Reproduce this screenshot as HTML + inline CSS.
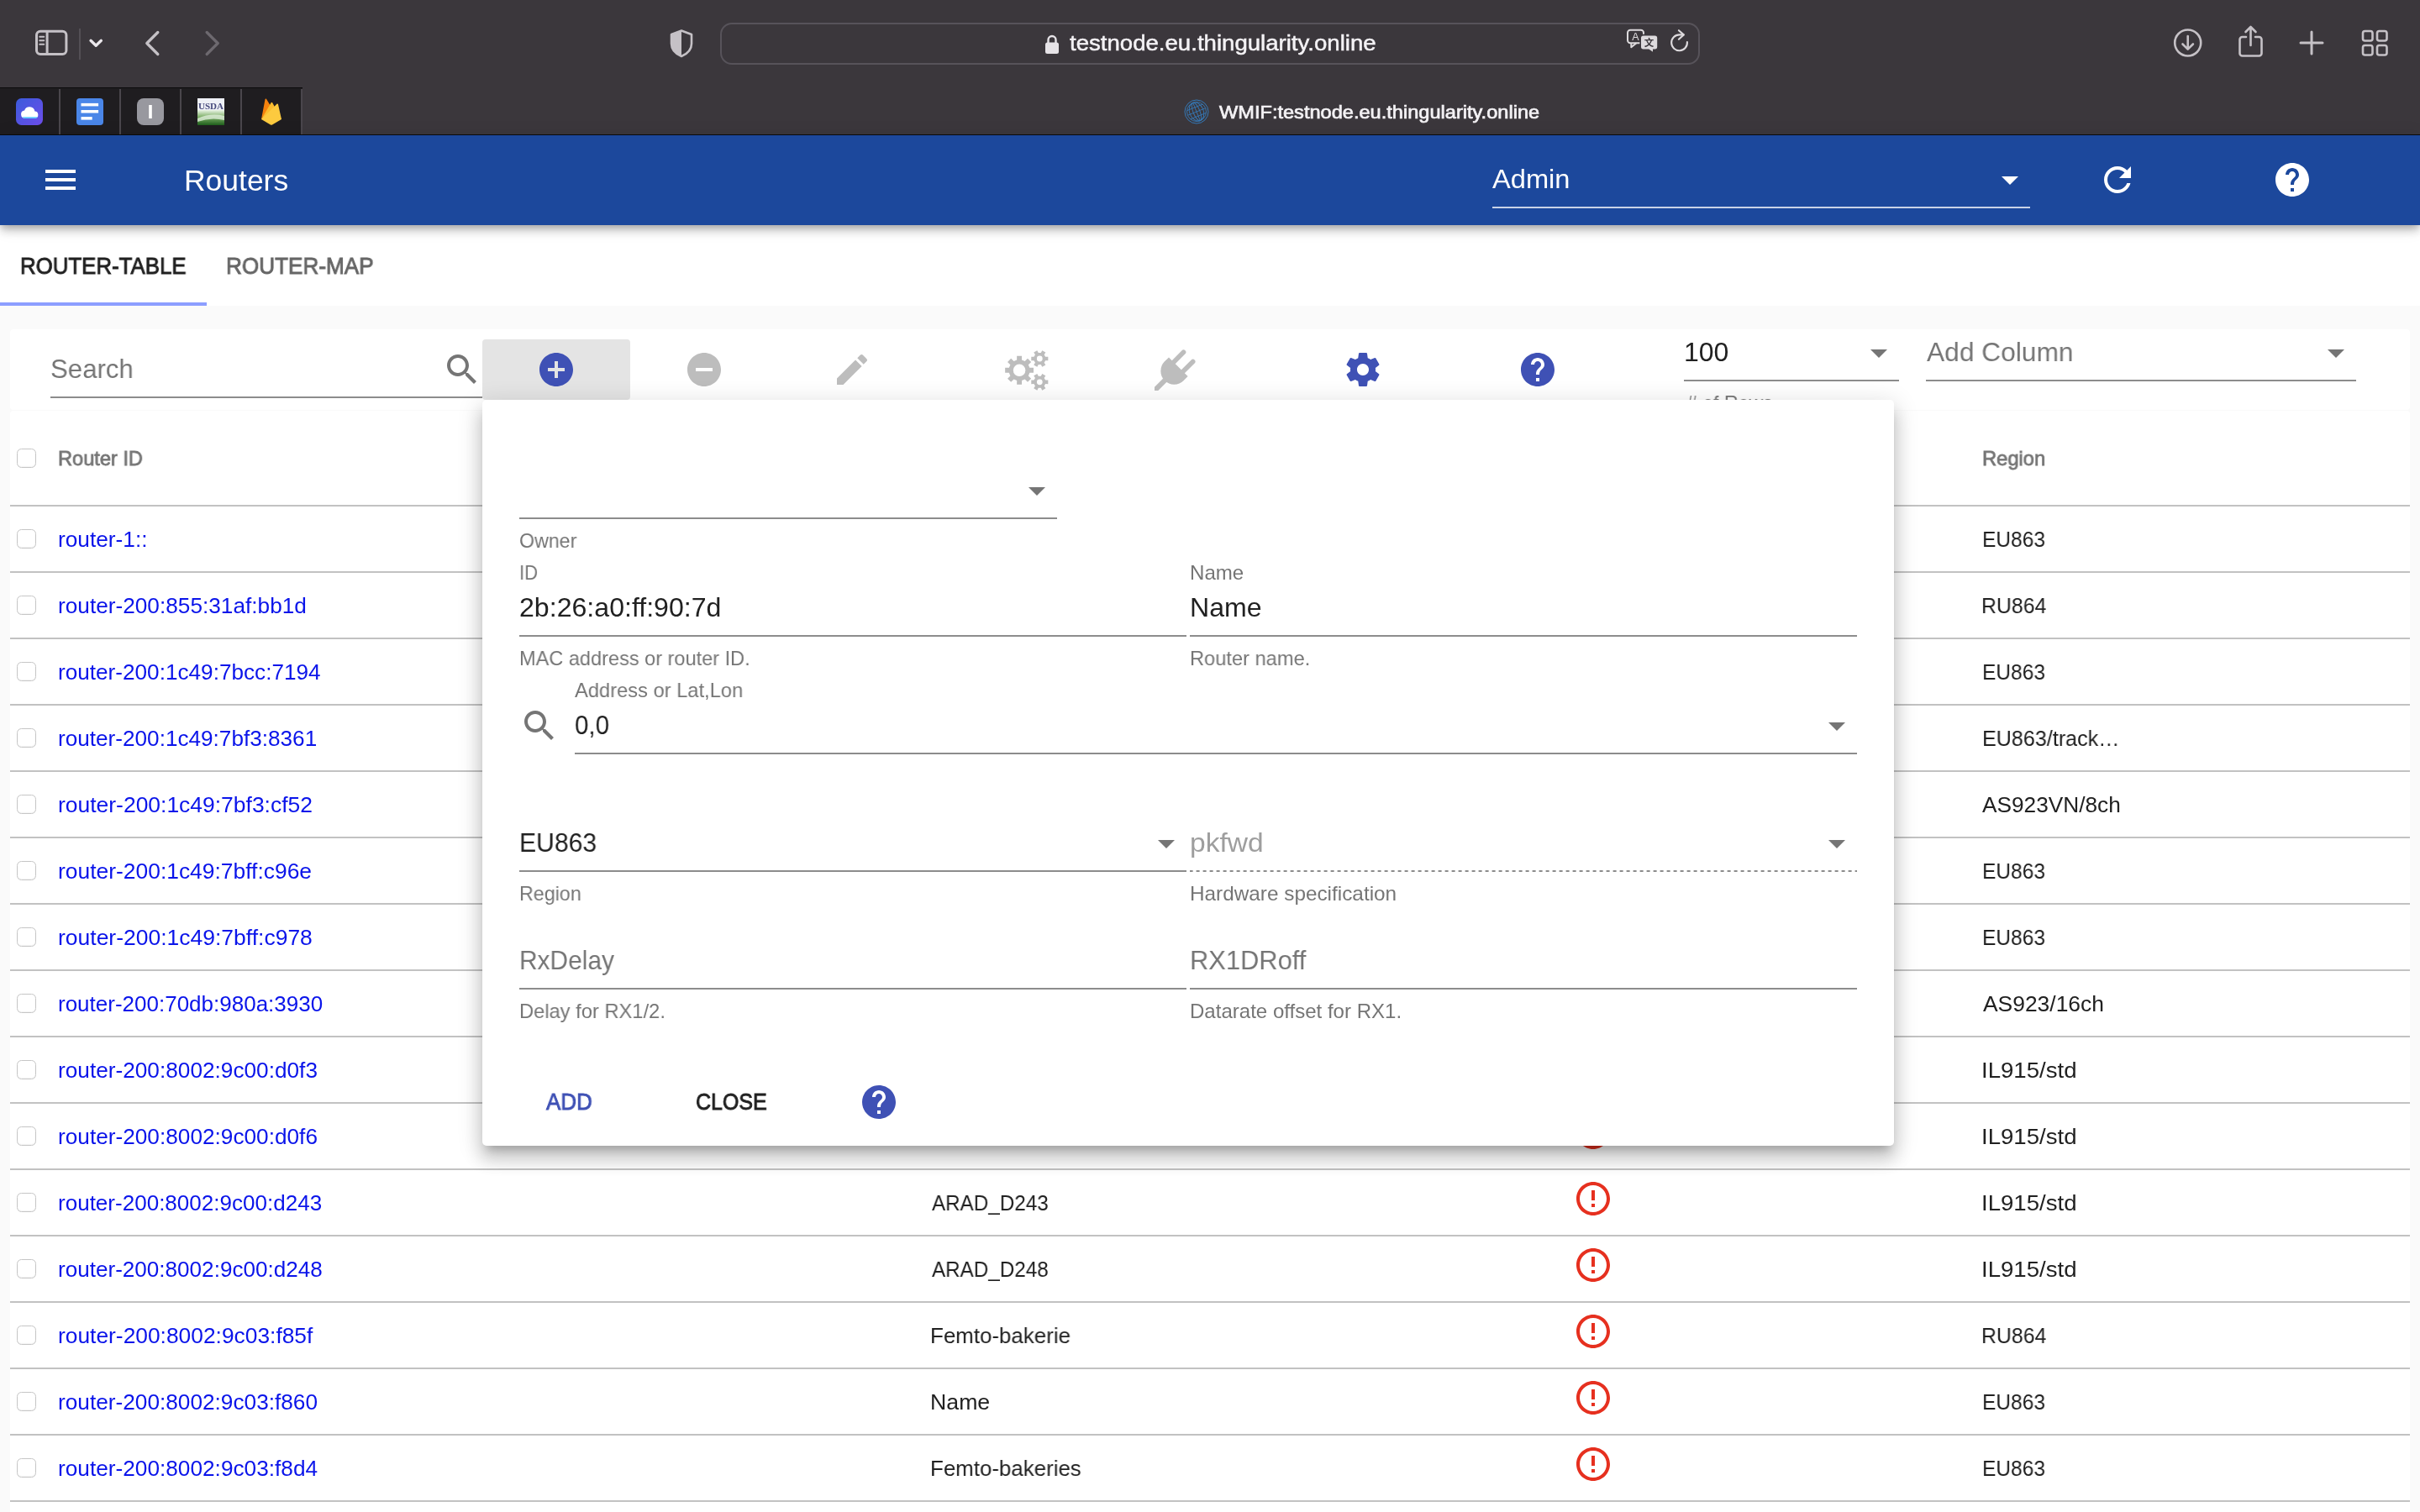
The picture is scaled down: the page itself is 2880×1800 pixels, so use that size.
<!DOCTYPE html>
<html lang="en"><head><meta charset="utf-8"><title>WMIF:testnode.eu.thingularity.online</title>
<style>

html,body{margin:0;padding:0;}
body{width:2880px;height:1800px;overflow:hidden;position:relative;background:#fafafa;font-family:"Liberation Sans",sans-serif;}
.ab{position:absolute;}
.t{position:absolute;white-space:nowrap;line-height:1;transform-origin:0 50%;will-change:transform;}
.ln{position:absolute;height:2px;background:#8e8e8e;}
a{color:inherit;text-decoration:none;}
.cb{left:20px;width:20.9px;height:20.9px;border:1.500px solid #c6c6c6;border-radius:5.500px;background:#fff;box-shadow:inset 0 -1px 1.500px rgba(0,0,0,.05)}

</style></head>
<body>
<div class="ab" style="left:0px;top:0px;width:2880px;height:161px;background:#3b373c;"></div>
<div class="ab" style="left:0px;top:104px;width:360px;height:1.3px;background:#0c0b0d;"></div>
<div class="ab" style="left:0px;top:105px;width:360px;height:55px;background:#1f1d20;"></div>
<div class="ab" style="left:70px;top:105.5px;width:2px;height:54.5px;background:#4a464c;"></div>
<div class="ab" style="left:142px;top:105.5px;width:2px;height:54.5px;background:#4a464c;"></div>
<div class="ab" style="left:214px;top:105.5px;width:2px;height:54.5px;background:#4a464c;"></div>
<div class="ab" style="left:286px;top:105.5px;width:2px;height:54.5px;background:#4a464c;"></div>
<div class="ab" style="left:358px;top:105.5px;width:2px;height:54.5px;background:#4a464c;"></div>
<div class="ab" style="left:0px;top:160px;width:2880px;height:1px;background:#0a0a0a;"></div>
<svg class="ab" style="left:19px;top:117px" width="32" height="32" viewBox="0 0 32 32"><defs><linearGradient id="g1" x1="0" y1="0" x2="1" y2="1"><stop offset="0" stop-color="#3b5bdb"/><stop offset="1" stop-color="#6d4deb"/></linearGradient></defs><rect width="32" height="32" rx="6.500" fill="url(#g1)"/><path fill="#fff" d="M10.800 23.800a4.700 4.700 0 0 1-.7-9.350 6.400 6.400 0 0 1 12.300 1.100A4.150 4.150 0 0 1 22.800 23.800z"/><path d="M7.500 22.300a4.700 4.700 0 0 0 3.300 1.600h12a4.150 4.150 0 0 0 3.300-1.600z" fill="#5cc8ff"/></svg>
<svg class="ab" style="left:91px;top:117px" width="32" height="32" viewBox="0 0 32 32"><rect width="32" height="32" rx="4" fill="#4a86e8"/><rect x="5.500" y="5.900" width="20.600" height="3.500" fill="#fff"/><rect x="5.500" y="14" width="20.600" height="3.500" fill="#fff"/><rect x="5.500" y="22.100" width="13.200" height="3.500" fill="#fff"/></svg>
<svg class="ab" style="left:163px;top:117px" width="32" height="32" viewBox="0 0 32 32"><rect width="32" height="32" rx="8" fill="#98989f"/><rect x="14.2" y="8" width="3.6" height="16" fill="#fff"/></svg>
<svg class="ab" style="left:235px;top:117px;will-change:transform" width="32" height="32" viewBox="0 0 32 32"><defs><linearGradient id="g4" x1="0" y1="0" x2="0" y2="1"><stop offset="0" stop-color="#e9f3e4"/><stop offset=".45" stop-color="#7fb069"/><stop offset="1" stop-color="#1f5f1c"/></linearGradient></defs><rect width="32" height="32" fill="#eef0f6"/><rect y="14" width="32" height="18" fill="url(#g4)"/><path d="M0 24 Q16 17 32 21 V26 Q16 22 0 28z" fill="#dfeeda" opacity=".8"/><text x="16" y="13" text-anchor="middle" font-family="Liberation Serif,serif" font-weight="700" font-size="11" fill="#34376f" opacity=".9" textLength="30" lengthAdjust="spacingAndGlyphs" style="filter:blur(.6px)">USDA</text></svg>
<svg class="ab" style="left:309px;top:116px" width="28" height="34" viewBox="0 0 28 34"><path fill="#f5820d" d="M2 26 L6.5 2.2 c.2-.9 1.2-1 1.6-.3 L13 10z"/><path fill="#fbbc2d" d="M2 26 L13.6 6.2 c.4-.7 1.2-.7 1.6 0 L26 26z"/><path fill="#fcca3f" d="M2 26 L20.5 7.8 c.5-.5 1.4-.3 1.5.5 L26 26 15 32.5 c-.7.4-1.4.4-2.1 0z"/></svg>
<svg class="ab" style="left:38px;top:30px" width="240" height="44" viewBox="0 0 240 44" fill="none" stroke="#c5c1c6" stroke-width="3" stroke-linecap="round" stroke-linejoin="round"><rect x="5.500" y="7.300" width="35.400" height="27.100" rx="4.500"/><path d="M18.100 7.300v27.100" stroke-linecap="butt"/><path d="M9.300 13.800h4.900M9.300 18.300h4.900M9.300 22.800h4.900" stroke-width="2.100"/><path d="M57 4.500v36" stroke="#5a565c" stroke-width="1.600"/><path d="M70 18.300l6.200 6 6.200-6" stroke="#ebe8ec" stroke-width="3.300"/><path d="M149.800 8.500L136.800 21.500 149.800 34.500" stroke-width="3.300"/><path d="M208.200 8.500L221.200 21.500 208.200 34.500" stroke="#6d696f" stroke-width="3.300"/></svg>
<svg class="ab" style="left:794px;top:32.800px" width="34" height="38" viewBox="0 0 34 38"><path d="M17 3.500 L29 8 V19 C29 26.500 23 31.500 17 34 C11 31.500 5 26.500 5 19 V8z" fill="none" stroke="#c5c1c6" stroke-width="2.600" stroke-linejoin="round"/><path d="M17 3.500 L5 8 V19 C5 26.500 11 31.500 17 34z" fill="#c5c1c6"/></svg>
<div class="ab" style="left:857px;top:27px;width:1161.500px;height:46px;border:2px solid #57535a;border-radius:14px;"></div>
<svg class="ab" style="left:1242px;top:38.500px" width="20" height="28" viewBox="0 0 20 28"><rect x="2" y="11.500" width="16" height="13.500" rx="2.500" fill="#e6e3e7"/><path d="M5.500 12V8.500a4.500 4.500 0 0 1 9 0V12" fill="none" stroke="#e6e3e7" stroke-width="2.400"/></svg>
<div class="t" id="t0" style="left:1273.25px;top:37.60px;font-size:26px;color:#f4f2f5;transform:scaleX(1.0613);-webkit-text-stroke:0.5px #f4f2f5;">testnode.eu.thingularity.online</div>
<svg class="ab" style="left:1932px;top:32px;will-change:transform" width="44" height="34" viewBox="0 0 44 34"><rect x="5" y="3.800" width="19" height="15.500" rx="3.200" fill="none" stroke="#dddadd" stroke-width="2"/><path d="M9.300 19.300V24.200L15.500 19.300" fill="none" stroke="#dddadd" stroke-width="2" stroke-linejoin="round"/><text x="14.500" y="16.300" text-anchor="middle" font-family="Liberation Sans,sans-serif" font-size="12.500" fill="#dddadd">A</text><path d="M23.700 9.600h13.800a3.500 3.500 0 0 1 3.500 3.500v10.600a3.500 3.500 0 0 1-3.500 3.500h-1.700v4l-5.800-4h-6.300a3.500 3.500 0 0 1-3.500-3.500v-10.600a3.500 3.500 0 0 1 3.500-3.500z" fill="#dddadd" stroke="#3b373c" stroke-width="1.600"/><text x="30.600" y="22.900" text-anchor="middle" font-family="Liberation Sans,Noto Sans CJK SC,sans-serif" font-size="11.500" font-weight="700" fill="#3b373c">文</text></svg>
<svg class="ab" style="left:1982px;top:32px" width="34" height="36" viewBox="0 0 34 36" fill="none" stroke="#dddadd" stroke-width="2.100" stroke-linecap="round" stroke-linejoin="round"><path d="M25.900 18A9.400 9.400 0 1 1 16.500 9.400H21.500"/><path d="M15.900 4.200l5.900 5.200-5.900 5.300"/></svg>
<svg class="ab" style="left:2580px;top:26px" width="290" height="50" viewBox="0 0 290 50" fill="none" stroke="#c5c1c6" stroke-width="2.600" stroke-linecap="round" stroke-linejoin="round"><circle cx="23.700" cy="25" r="15.500"/><path d="M23.700 17v15M17.500 26.500l6.200 6.200 6.200-6.200"/><path d="M93 18h-4.500a3 3 0 0 0-3 3v16.500a3 3 0 0 0 3 3h20a3 3 0 0 0 3-3V21a3 3 0 0 0-3-3H104"/><path d="M98.500 28V6.500M92.500 12l6-6 6 6"/><path d="M158 25h26M171 12v26" stroke-width="3"/><rect x="232" y="11" width="11.500" height="11.500" rx="2.500"/><rect x="249" y="11" width="11.500" height="11.500" rx="2.500"/><rect x="232" y="28" width="11.500" height="11.500" rx="2.500"/><rect x="249" y="28" width="11.500" height="11.500" rx="2.500"/></svg>
<svg class="ab" style="left:1409px;top:118px" width="30" height="30" viewBox="0 0 30 30" fill="none" stroke="#3579b8" stroke-width="1"><circle cx="15" cy="15" r="14"/><circle cx="15" cy="15" r="11.500" stroke-width=".9"/><g transform="rotate(-22 15 15)" stroke-width=".9"><ellipse cx="15" cy="15" rx="4" ry="11.500"/><ellipse cx="15" cy="15" rx="8.300" ry="11.500"/><path d="M15 3.500v23M3.500 15h23M5 9.500h20M5 20.500h20"/></g></svg>
<div class="t" id="t1" style="left:1451.32px;top:122.55px;font-size:22px;color:#f4f2f5;transform:scaleX(1.0723);-webkit-text-stroke:0.7px #f4f2f5;">WMIF:testnode.eu.thingularity.online</div>
<div class="ab" style="left:0;top:161px;width:2880px;height:107px;background:#1c489c;box-shadow:0 4px 8px -2px rgba(0,0,0,.2),0 8px 10px 0 rgba(0,0,0,.14),0 2px 20px 0 rgba(0,0,0,.12);z-index:3"></div>
<div class="ab" style="left:0;top:0;width:2880px;height:300px;z-index:4">
<div class="ab" style="left:54px;top:202px;width:36px;height:4px;background:#fff;"></div>
<div class="ab" style="left:54px;top:212px;width:36px;height:4px;background:#fff;"></div>
<div class="ab" style="left:54px;top:222px;width:36px;height:4px;background:#fff;"></div>
<div class="t" id="t2" style="left:219.19px;top:197.30px;font-size:35px;color:#fff;transform:scaleX(1.0129);">Routers</div>
<div class="t" id="t3" style="left:1776.17px;top:197.07px;font-size:32px;color:#fff;transform:scaleX(1.0192);">Admin</div>
<div class="ab" style="left:1776px;top:246px;width:640px;height:2px;background:rgba(255,255,255,.76);"></div>
<svg class="ab" style="left:2368.0px;top:190.0px" width="48" height="48" viewBox="0 0 24 24" ><path fill="#fff" d="M7 10l5 5 5-5z"/></svg>
<svg class="ab" style="left:2496.0px;top:190.0px" width="48" height="48" viewBox="0 0 24 24" ><path fill="#fff" d="M17.65 6.35C16.2 4.9 14.21 4 12 4c-4.42 0-7.99 3.58-7.99 8s3.57 8 7.99 8c3.73 0 6.84-2.55 7.73-6h-2.08c-.82 2.33-3.04 4-5.65 4-3.31 0-6-2.69-6-6s2.69-6 6-6c1.66 0 3.14.69 4.22 1.78L13 11h7V4l-2.35 2.35z"/></svg>
<svg class="ab" style="left:2704.0px;top:190.0px" width="48" height="48" viewBox="0 0 24 24" ><path fill="#fff" d="M12 2C6.48 2 2 6.48 2 12s4.48 10 10 10 10-4.48 10-10S17.52 2 12 2zm1 17h-2v-2h2v2zm2.07-7.75l-.9.92C13.45 12.9 13 13.5 13 15h-2v-.5c0-1.1.45-2.1 1.17-2.83l1.24-1.26c.37-.36.59-.86.59-1.41 0-1.1-.9-2-2-2s-2 .9-2 2H8c0-2.21 1.79-4 4-4s4 1.79 4 4c0 .88-.36 1.68-.93 2.25z"/></svg>
</div>
<div class="ab" style="left:0px;top:268px;width:2880px;height:96px;background:#fff;"></div>
<div class="t" id="t4" style="left:23.57px;top:302.52px;font-size:28px;color:#212121;transform:scaleX(0.9224);-webkit-text-stroke:0.9px #212121;">ROUTER-TABLE</div>
<div class="t" id="t5" style="left:269.05px;top:302.52px;font-size:28px;color:#666;transform:scaleX(0.9333);-webkit-text-stroke:0.9px #666;">ROUTER-MAP</div>
<div class="ab" style="left:0px;top:360px;width:246px;height:4px;background:#8c9eff;"></div>
<div class="ab" style="left:12px;top:392px;width:2856px;height:96px;background:#fff;border-radius:4px;"></div>
<div class="t" id="t6" style="left:59.64px;top:422.97px;font-size:32px;color:#757575;transform:scaleX(0.9747);">Search</div>
<div class="ab" style="left:60px;top:472px;width:514px;height:2px;background:#8c8c8c;"></div>
<svg class="ab" style="left:526.0px;top:416.0px" width="48" height="48" viewBox="0 0 24 24" ><path fill="#757575" d="M15.5 14h-.79l-.28-.27C15.41 12.59 16 11.11 16 9.5 16 5.91 13.09 3 9.5 3S3 5.91 3 9.5 5.91 16 9.5 16c1.61 0 3.09-.59 4.23-1.57l.27.28v.79l5 4.99L20.49 19l-4.99-5zm-6 0C7.01 14 5 11.99 5 9.5S7.01 5 9.5 5 14 7.01 14 9.5 11.99 14 9.5 14z"/></svg>
<div class="ab" style="left:574px;top:404px;width:176px;height:72px;background:#e4e4e4;border-radius:4px;"></div>
<svg class="ab" style="left:638.0px;top:416.0px" width="48" height="48" viewBox="0 0 24 24" ><path fill="#3f51b5" d="M12 2C6.48 2 2 6.48 2 12s4.48 10 10 10 10-4.48 10-10S17.52 2 12 2zm5 11h-4v4h-2v-4H7v-2h4V7h2v4h4v2z"/></svg>
<svg class="ab" style="left:814.0px;top:416.0px" width="48" height="48" viewBox="0 0 24 24" ><path fill="#bdbdbd" d="M12 2C6.48 2 2 6.48 2 12s4.48 10 10 10 10-4.48 10-10S17.52 2 12 2zm5 11H7v-2h10v2z"/></svg>
<svg class="ab" style="left:990.0px;top:416.0px" width="48" height="48" viewBox="0 0 24 24" ><path fill="#bdbdbd" d="M3 17.25V21h3.75L17.81 9.94l-3.75-3.75L3 17.25zM20.71 7.04c.39-.39.39-1.02 0-1.41l-2.34-2.34c-.39-.39-1.02-.39-1.41 0l-1.83 1.83 3.75 3.75 1.83-1.83z"/></svg>
<svg class="ab" style="left:1190px;top:410px" width="64" height="60" viewBox="0 0 64 60"><path fill="#bdbdbd" fill-rule="evenodd" d="M35.35 27.86 L40.04 27.84 L40.04 33.76 L35.35 33.74 L33.84 37.38 L37.17 40.69 L32.99 44.87 L29.68 41.54 L26.04 43.05 L26.06 47.74 L20.14 47.74 L20.16 43.05 L16.52 41.54 L13.21 44.87 L9.03 40.69 L12.36 37.38 L10.85 33.74 L6.16 33.76 L6.16 27.84 L10.85 27.86 L12.36 24.22 L9.03 20.91 L13.21 16.73 L16.52 20.06 L20.16 18.55 L20.14 13.86 L26.06 13.86 L26.04 18.55 L29.68 20.06 L32.99 16.73 L37.17 20.91 L33.84 24.22Z M30.40 30.80 A7.3 7.3 0 1 0 15.80 30.80 A7.3 7.3 0 1 0 30.40 30.80Z"/><path fill="#bdbdbd" fill-rule="evenodd" d="M54.15 14.78 L57.33 14.65 L57.33 19.35 L54.15 19.22 L52.65 21.82 L54.35 24.51 L50.28 26.86 L48.80 24.04 L45.80 24.04 L44.32 26.86 L40.25 24.51 L41.95 21.82 L40.45 19.22 L37.27 19.35 L37.27 14.65 L40.45 14.78 L41.95 12.18 L40.25 9.49 L44.32 7.14 L45.80 9.96 L48.80 9.96 L50.28 7.14 L54.35 9.49 L52.65 12.18Z M50.70 17.00 A3.4 3.4 0 1 0 43.90 17.00 A3.4 3.4 0 1 0 50.70 17.00Z"/><path fill="#bdbdbd" fill-rule="evenodd" d="M54.15 42.58 L57.33 42.45 L57.33 47.15 L54.15 47.02 L52.65 49.62 L54.35 52.31 L50.28 54.66 L48.80 51.84 L45.80 51.84 L44.32 54.66 L40.25 52.31 L41.95 49.62 L40.45 47.02 L37.27 47.15 L37.27 42.45 L40.45 42.58 L41.95 39.98 L40.25 37.29 L44.32 34.94 L45.80 37.76 L48.80 37.76 L50.28 34.94 L54.35 37.29 L52.65 39.98Z M50.70 44.80 A3.4 3.4 0 1 0 43.90 44.80 A3.4 3.4 0 1 0 50.70 44.80Z"/></svg>
<svg class="ab" style="left:1373.8px;top:410px" width="60" height="55" viewBox="0 0 60 55"><g transform="translate(28.3 26.7) rotate(45)" fill="#bdbdbd"><rect x="-10.700" y="-19.500" width="5.600" height="22" rx="2.800"/><rect x="5.100" y="-19.500" width="5.600" height="22" rx="2.800"/><path d="M-16 0h32v7a16 16 0 0 1-32 0z"/><rect x="-3" y="20" width="6" height="40"/></g></svg>
<svg class="ab" style="left:1598.0px;top:416.0px" width="48" height="48" viewBox="0 0 24 24" ><path fill="#3f51b5" d="M19.43 12.98c.04-.32.07-.64.07-.98s-.03-.66-.07-.98l2.11-1.65c.19-.15.24-.42.12-.64l-2-3.46c-.12-.22-.39-.3-.61-.22l-2.49 1c-.52-.4-1.08-.73-1.69-.98l-.38-2.65C14.46 2.18 14.25 2 14 2h-4c-.25 0-.46.18-.49.42l-.38 2.65c-.61.25-1.17.59-1.69.98l-2.49-1c-.23-.09-.49 0-.61.22l-2 3.46c-.13.22-.07.49.12.64l2.11 1.65c-.04.32-.07.65-.07.98s.03.66.07.98l-2.11 1.65c-.19.15-.24.42-.12.64l2 3.46c.12.22.39.3.61.22l2.49-1c.52.4 1.08.73 1.69.98l.38 2.65c.03.24.24.42.49.42h4c.25 0 .46-.18.49-.42l.38-2.65c.61-.25 1.17-.59 1.69-.98l2.49 1c.23.09.49 0 .61-.22l2-3.46c.12-.22.07-.49-.12-.64l-2.11-1.65zM12 15.5c-1.93 0-3.5-1.57-3.5-3.5s1.57-3.5 3.5-3.5 3.5 1.57 3.5 3.5-1.57 3.5-3.5 3.5z"/></svg>
<svg class="ab" style="left:1806.0px;top:416.0px" width="48" height="48" viewBox="0 0 24 24" ><path fill="#3f51b5" d="M12 2C6.48 2 2 6.48 2 12s4.48 10 10 10 10-4.48 10-10S17.52 2 12 2zm1 17h-2v-2h2v2zm2.07-7.75l-.9.92C13.45 12.9 13 13.5 13 15h-2v-.5c0-1.1.45-2.1 1.17-2.83l1.24-1.26c.37-.36.59-.86.59-1.41 0-1.1-.9-2-2-2s-2 .9-2 2H8c0-2.21 1.79-4 4-4s4 1.79 4 4c0 .88-.36 1.68-.93 2.25z"/></svg>
<div class="t" id="t7" style="left:2003.63px;top:402.77px;font-size:32px;color:#212121;transform:scaleX(0.9970);">100</div>
<div class="ab" style="left:2004px;top:452px;width:256px;height:2px;background:#8c8c8c;"></div>
<svg class="ab" style="left:2212.0px;top:396.0px" width="48" height="48" viewBox="0 0 24 24" ><path fill="#757575" d="M7 10l5 5 5-5z"/></svg>
<div class="t" id="t8" style="left:2007.18px;top:467.88px;font-size:24px;color:#757575;transform:scaleX(0.9617);"># of Rows</div>
<div class="t" id="t9" style="left:2292.78px;top:402.77px;font-size:32px;color:#757575;transform:scaleX(0.9909);">Add Column</div>
<div class="ab" style="left:2292px;top:452px;width:512px;height:2px;background:#8c8c8c;"></div>
<svg class="ab" style="left:2756.0px;top:396.0px" width="48" height="48" viewBox="0 0 24 24" ><path fill="#757575" d="M7 10l5 5 5-5z"/></svg>
<div class="ab" style="left:12px;top:489px;width:2856px;height:1320px;background:#fff;border-radius:4px;"></div>
<div class="ab cb" style="top:534.3px"></div>
<div class="t" id="t10" style="left:68.63px;top:533.88px;font-size:24px;color:#757575;transform:scaleX(0.9827);-webkit-text-stroke:0.8px #757575;">Router ID</div>
<div class="t" id="t11" style="left:2358.52px;top:533.88px;font-size:24px;color:#757575;transform:scaleX(0.9876);-webkit-text-stroke:0.8px #757575;">Region</div>
<div class="ab" style="left:12px;top:601px;width:2856px;height:2px;background:#c2c2c2;"></div>
<div class="ab cb" style="top:630.3px"></div>
<div class="t" id="t12" style="left:68.63px;top:628.80px;font-size:26px;color:#0a14ea;transform:scaleX(1.0101);"><a>router-1::</a></div>
<div class="t" id="t13" style="left:2358.59px;top:628.80px;font-size:26px;color:#212121;transform:scaleX(0.9443);">EU863</div>
<div class="ab" style="left:12px;top:680px;width:2856px;height:2px;background:#c2c2c2;"></div>
<div class="ab cb" style="top:709.3px"></div>
<div class="t" id="t14" style="left:68.64px;top:707.80px;font-size:26px;color:#0a14ea;transform:scaleX(1.0083);"><a>router-200:855:31af:bb1d</a></div>
<div class="t" id="t15" style="left:2358.27px;top:707.80px;font-size:26px;color:#212121;transform:scaleX(0.9562);">RU864</div>
<div class="ab" style="left:12px;top:759px;width:2856px;height:2px;background:#c2c2c2;"></div>
<div class="ab cb" style="top:788.3px"></div>
<div class="t" id="t16" style="left:68.64px;top:786.80px;font-size:26px;color:#0a14ea;transform:scaleX(1.0059);"><a>router-200:1c49:7bcc:7194</a></div>
<div class="t" id="t17" style="left:2358.59px;top:786.80px;font-size:26px;color:#212121;transform:scaleX(0.9443);">EU863</div>
<div class="ab" style="left:12px;top:838px;width:2856px;height:2px;background:#c2c2c2;"></div>
<div class="ab cb" style="top:867.3px"></div>
<div class="t" id="t18" style="left:68.64px;top:865.80px;font-size:26px;color:#0a14ea;transform:scaleX(1.0056);"><a>router-200:1c49:7bf3:8361</a></div>
<div class="t" id="t19" style="left:2358.55px;top:865.80px;font-size:26px;color:#212121;transform:scaleX(0.9664);">EU863/track…</div>
<div class="ab" style="left:12px;top:917px;width:2856px;height:2px;background:#c2c2c2;"></div>
<div class="ab cb" style="top:946.3px"></div>
<div class="t" id="t20" style="left:68.62px;top:944.80px;font-size:26px;color:#0a14ea;transform:scaleX(1.0175);"><a>router-200:1c49:7bf3:cf52</a></div>
<div class="t" id="t21" style="left:2359.47px;top:944.80px;font-size:26px;color:#212121;transform:scaleX(1.0087);">AS923VN/8ch</div>
<div class="ab" style="left:12px;top:996px;width:2856px;height:2px;background:#c2c2c2;"></div>
<div class="ab cb" style="top:1025.3px"></div>
<div class="t" id="t22" style="left:68.62px;top:1023.80px;font-size:26px;color:#0a14ea;transform:scaleX(1.0160);"><a>router-200:1c49:7bff:c96e</a></div>
<div class="t" id="t23" style="left:2358.59px;top:1023.80px;font-size:26px;color:#212121;transform:scaleX(0.9443);">EU863</div>
<div class="ab" style="left:12px;top:1075px;width:2856px;height:2px;background:#c2c2c2;"></div>
<div class="ab cb" style="top:1104.3px"></div>
<div class="t" id="t24" style="left:68.62px;top:1102.80px;font-size:26px;color:#0a14ea;transform:scaleX(1.0187);"><a>router-200:1c49:7bff:c978</a></div>
<div class="t" id="t25" style="left:2358.59px;top:1102.80px;font-size:26px;color:#212121;transform:scaleX(0.9443);">EU863</div>
<div class="ab" style="left:12px;top:1154px;width:2856px;height:2px;background:#c2c2c2;"></div>
<div class="ab cb" style="top:1183.3px"></div>
<div class="t" id="t26" style="left:68.65px;top:1181.80px;font-size:26px;color:#0a14ea;transform:scaleX(0.9997);"><a>router-200:70db:980a:3930</a></div>
<div class="t" id="t27" style="left:2359.67px;top:1181.80px;font-size:26px;color:#212121;transform:scaleX(1.0159);">AS923/16ch</div>
<div class="ab" style="left:12px;top:1233px;width:2856px;height:2px;background:#c2c2c2;"></div>
<div class="ab cb" style="top:1262.3px"></div>
<div class="t" id="t28" style="left:68.64px;top:1260.80px;font-size:26px;color:#0a14ea;transform:scaleX(1.0082);"><a>router-200:8002:9c00:d0f3</a></div>
<div class="t" id="t29" style="left:2358.08px;top:1260.80px;font-size:26px;color:#212121;transform:scaleX(1.0615);">IL915/std</div>
<div class="ab" style="left:12px;top:1312px;width:2856px;height:2px;background:#c2c2c2;"></div>
<div class="ab cb" style="top:1341.3px"></div>
<div class="t" id="t30" style="left:68.64px;top:1339.80px;font-size:26px;color:#0a14ea;transform:scaleX(1.0082);"><a>router-200:8002:9c00:d0f6</a></div>
<svg class="ab" style="left:1872.0px;top:1324.0px" width="48" height="48" viewBox="0 0 24 24" ><path fill="#e6301f" d="M11 15h2v2h-2zm0-8h2v6h-2zm.99-5C6.47 2 2 6.48 2 12s4.47 10 9.99 10C17.52 22 22 17.52 22 12S17.52 2 11.99 2zM12 20c-4.42 0-8-3.58-8-8s3.58-8 8-8 8 3.58 8 8-3.58 8-8 8z"/></svg>
<div class="t" id="t31" style="left:2358.08px;top:1339.80px;font-size:26px;color:#212121;transform:scaleX(1.0615);">IL915/std</div>
<div class="ab" style="left:12px;top:1391px;width:2856px;height:2px;background:#c2c2c2;"></div>
<div class="ab cb" style="top:1420.3px"></div>
<div class="t" id="t32" style="left:68.65px;top:1418.80px;font-size:26px;color:#0a14ea;transform:scaleX(1.0014);"><a>router-200:8002:9c00:d243</a></div>
<div class="t" id="t33" style="left:1108.78px;top:1418.80px;font-size:26px;color:#212121;transform:scaleX(0.9314);">ARAD_D243</div>
<svg class="ab" style="left:1872.0px;top:1403.0px" width="48" height="48" viewBox="0 0 24 24" ><path fill="#e6301f" d="M11 15h2v2h-2zm0-8h2v6h-2zm.99-5C6.47 2 2 6.48 2 12s4.47 10 9.99 10C17.52 22 22 17.52 22 12S17.52 2 11.99 2zM12 20c-4.42 0-8-3.58-8-8s3.58-8 8-8 8 3.58 8 8-3.58 8-8 8z"/></svg>
<div class="t" id="t34" style="left:2358.08px;top:1418.80px;font-size:26px;color:#212121;transform:scaleX(1.0615);">IL915/std</div>
<div class="ab" style="left:12px;top:1470px;width:2856px;height:2px;background:#c2c2c2;"></div>
<div class="ab cb" style="top:1499.3px"></div>
<div class="t" id="t35" style="left:68.64px;top:1497.80px;font-size:26px;color:#0a14ea;transform:scaleX(1.0033);"><a>router-200:8002:9c00:d248</a></div>
<div class="t" id="t36" style="left:1108.78px;top:1497.80px;font-size:26px;color:#212121;transform:scaleX(0.9314);">ARAD_D248</div>
<svg class="ab" style="left:1872.0px;top:1482.0px" width="48" height="48" viewBox="0 0 24 24" ><path fill="#e6301f" d="M11 15h2v2h-2zm0-8h2v6h-2zm.99-5C6.47 2 2 6.48 2 12s4.47 10 9.99 10C17.52 22 22 17.52 22 12S17.52 2 11.99 2zM12 20c-4.42 0-8-3.58-8-8s3.58-8 8-8 8 3.58 8 8-3.58 8-8 8z"/></svg>
<div class="t" id="t37" style="left:2358.08px;top:1497.80px;font-size:26px;color:#212121;transform:scaleX(1.0615);">IL915/std</div>
<div class="ab" style="left:12px;top:1549px;width:2856px;height:2px;background:#c2c2c2;"></div>
<div class="ab cb" style="top:1578.3px"></div>
<div class="t" id="t38" style="left:68.63px;top:1576.80px;font-size:26px;color:#0a14ea;transform:scaleX(1.0138);"><a>router-200:8002:9c03:f85f</a></div>
<div class="t" id="t39" style="left:1106.78px;top:1576.80px;font-size:26px;color:#212121;transform:scaleX(0.9959);">Femto-bakerie</div>
<svg class="ab" style="left:1872.0px;top:1561.0px" width="48" height="48" viewBox="0 0 24 24" ><path fill="#e6301f" d="M11 15h2v2h-2zm0-8h2v6h-2zm.99-5C6.47 2 2 6.48 2 12s4.47 10 9.99 10C17.52 22 22 17.52 22 12S17.52 2 11.99 2zM12 20c-4.42 0-8-3.58-8-8s3.58-8 8-8 8 3.58 8 8-3.58 8-8 8z"/></svg>
<div class="t" id="t40" style="left:2358.27px;top:1576.80px;font-size:26px;color:#212121;transform:scaleX(0.9562);">RU864</div>
<div class="ab" style="left:12px;top:1628px;width:2856px;height:2px;background:#c2c2c2;"></div>
<div class="ab cb" style="top:1657.3px"></div>
<div class="t" id="t41" style="left:68.64px;top:1655.80px;font-size:26px;color:#0a14ea;transform:scaleX(1.0084);"><a>router-200:8002:9c03:f860</a></div>
<div class="t" id="t42" style="left:1106.72px;top:1655.80px;font-size:26px;color:#212121;transform:scaleX(1.0268);">Name</div>
<svg class="ab" style="left:1872.0px;top:1640.0px" width="48" height="48" viewBox="0 0 24 24" ><path fill="#e6301f" d="M11 15h2v2h-2zm0-8h2v6h-2zm.99-5C6.47 2 2 6.48 2 12s4.47 10 9.99 10C17.52 22 22 17.52 22 12S17.52 2 11.99 2zM12 20c-4.42 0-8-3.58-8-8s3.58-8 8-8 8 3.58 8 8-3.58 8-8 8z"/></svg>
<div class="t" id="t43" style="left:2358.59px;top:1655.80px;font-size:26px;color:#212121;transform:scaleX(0.9443);">EU863</div>
<div class="ab" style="left:12px;top:1707px;width:2856px;height:2px;background:#c2c2c2;"></div>
<div class="ab cb" style="top:1736.3px"></div>
<div class="t" id="t44" style="left:68.64px;top:1734.80px;font-size:26px;color:#0a14ea;transform:scaleX(1.0086);"><a>router-200:8002:9c03:f8d4</a></div>
<div class="t" id="t45" style="left:1106.78px;top:1734.80px;font-size:26px;color:#212121;transform:scaleX(0.9954);">Femto-bakeries</div>
<svg class="ab" style="left:1872.0px;top:1719.0px" width="48" height="48" viewBox="0 0 24 24" ><path fill="#e6301f" d="M11 15h2v2h-2zm0-8h2v6h-2zm.99-5C6.47 2 2 6.48 2 12s4.47 10 9.99 10C17.52 22 22 17.52 22 12S17.52 2 11.99 2zM12 20c-4.42 0-8-3.58-8-8s3.58-8 8-8 8 3.58 8 8-3.58 8-8 8z"/></svg>
<div class="t" id="t46" style="left:2358.59px;top:1734.80px;font-size:26px;color:#212121;transform:scaleX(0.9443);">EU863</div>
<div class="ab" style="left:12px;top:1786px;width:2856px;height:2px;background:#c2c2c2;"></div>
<div class="ab" style="left:574px;top:476px;width:1680px;height:888px;background:#fff;border-radius:5px;box-shadow:0 10px 10px -6px rgba(0,0,0,.2),0 16px 20px 2px rgba(0,0,0,.14),0 6px 28px 4px rgba(0,0,0,.12);"></div>
<div class="ab" style="left:618px;top:616px;width:640px;height:2px;background:#8c8c8c;"></div>
<svg class="ab" style="left:1210.0px;top:560.0px" width="48" height="48" viewBox="0 0 24 24" ><path fill="#757575" d="M7 10l5 5 5-5z"/></svg>
<div class="t" id="t47" style="left:617.71px;top:632.28px;font-size:24px;color:#757575;transform:scaleX(0.9661);">Owner</div>
<div class="t" id="t48" style="left:617.84px;top:670.28px;font-size:24px;color:#757575;transform:scaleX(0.9164);">ID</div>
<div class="t" id="t49" style="left:617.67px;top:706.87px;font-size:32px;color:#212121;transform:scaleX(1.0034);">2b:26:a0:ff:90:7d</div>
<div class="ab" style="left:618px;top:756px;width:794px;height:2px;background:#8c8c8c;"></div>
<div class="t" id="t50" style="left:617.94px;top:771.78px;font-size:24px;color:#757575;transform:scaleX(0.9805);">MAC address or router ID.</div>
<div class="t" id="t51" style="left:1415.99px;top:670.28px;font-size:24px;color:#757575;transform:scaleX(1.0037);">Name</div>
<div class="t" id="t52" style="left:1415.67px;top:706.97px;font-size:32px;color:#212121;transform:scaleX(1.0015);">Name</div>
<div class="ab" style="left:1416px;top:756px;width:794px;height:2px;background:#8c8c8c;"></div>
<div class="t" id="t53" style="left:1415.73px;top:771.78px;font-size:24px;color:#757575;transform:scaleX(0.9848);">Router name.</div>
<div class="t" id="t54" style="left:684.40px;top:810.18px;font-size:24px;color:#757575;transform:scaleX(0.9873);">Address or Lat,Lon</div>
<svg class="ab" style="left:618.0px;top:840.0px" width="48" height="48" viewBox="0 0 24 24" ><path fill="#757575" d="M15.5 14h-.79l-.28-.27C15.41 12.59 16 11.11 16 9.5 16 5.91 13.09 3 9.5 3S3 5.91 3 9.5 5.91 16 9.5 16c1.61 0 3.09-.59 4.23-1.57l.27.28v.79l5 4.99L20.49 19l-4.99-5zm-6 0C7.01 14 5 11.99 5 9.5S7.01 5 9.5 5 14 7.01 14 9.5 11.99 14 9.5 14z"/></svg>
<div class="t" id="t55" style="left:684.45px;top:846.87px;font-size:32px;color:#212121;transform:scaleX(0.9214);">0,0</div>
<div class="ab" style="left:684px;top:896px;width:1526px;height:2px;background:#8c8c8c;"></div>
<svg class="ab" style="left:2162.0px;top:840.0px" width="48" height="48" viewBox="0 0 24 24" ><path fill="#757575" d="M7 10l5 5 5-5z"/></svg>
<div class="t" id="t56" style="left:618.03px;top:987.17px;font-size:32px;color:#212121;transform:scaleX(0.9419);">EU863</div>
<div class="ab" style="left:618px;top:1036px;width:794px;height:2px;background:#8c8c8c;"></div>
<svg class="ab" style="left:1364.0px;top:980.0px" width="48" height="48" viewBox="0 0 24 24" ><path fill="#757575" d="M7 10l5 5 5-5z"/></svg>
<div class="t" id="t57" style="left:617.76px;top:1052.28px;font-size:24px;color:#757575;transform:scaleX(0.9697);">Region</div>
<div class="t" id="t58" style="left:1415.90px;top:987.17px;font-size:32px;color:#9e9e9e;transform:scaleX(1.0491);">pkfwd</div>
<div class="ab" style="left:1416px;top:1036px;width:794px;height:2px;background:repeating-linear-gradient(90deg,#8c8c8c 0 4.200px,transparent 4.200px 8px);background-position:-0.400px 0"></div>
<svg class="ab" style="left:2162.0px;top:980.0px" width="48" height="48" viewBox="0 0 24 24" ><path fill="#757575" d="M7 10l5 5 5-5z"/></svg>
<div class="t" id="t59" style="left:1415.67px;top:1052.28px;font-size:24px;color:#757575;transform:scaleX(1.0137);">Hardware specification</div>
<div class="t" id="t60" style="left:617.75px;top:1127.17px;font-size:32px;color:#757575;transform:scaleX(0.9338);">RxDelay</div>
<div class="ab" style="left:618px;top:1176px;width:794px;height:2px;background:#8c8c8c;"></div>
<div class="t" id="t61" style="left:617.73px;top:1192.28px;font-size:24px;color:#757575;transform:scaleX(0.9873);">Delay for RX1/2.</div>
<div class="t" id="t62" style="left:1415.77px;top:1127.17px;font-size:32px;color:#757575;transform:scaleX(0.9645);">RX1DRoff</div>
<div class="ab" style="left:1416px;top:1176px;width:794px;height:2px;background:#8c8c8c;"></div>
<div class="t" id="t63" style="left:1415.70px;top:1192.28px;font-size:24px;color:#757575;transform:scaleX(1.0016);">Datarate offset for RX1.</div>
<div class="t" id="t64" style="left:650.43px;top:1297.52px;font-size:28px;color:#3f51b5;transform:scaleX(0.9249);-webkit-text-stroke:0.9px #3f51b5;">ADD</div>
<div class="t" id="t65" style="left:827.52px;top:1297.52px;font-size:28px;color:#212121;transform:scaleX(0.8920);-webkit-text-stroke:0.9px #212121;">CLOSE</div>
<svg class="ab" style="left:1022.0px;top:1288.0px" width="48" height="48" viewBox="0 0 24 24" ><path fill="#3f51b5" d="M12 2C6.48 2 2 6.48 2 12s4.48 10 10 10 10-4.48 10-10S17.52 2 12 2zm1 17h-2v-2h2v2zm2.07-7.75l-.9.92C13.45 12.9 13 13.5 13 15h-2v-.5c0-1.1.45-2.1 1.17-2.83l1.24-1.26c.37-.36.59-.86.59-1.41 0-1.1-.9-2-2-2s-2 .9-2 2H8c0-2.21 1.79-4 4-4s4 1.79 4 4c0 .88-.36 1.68-.93 2.25z"/></svg>
</body></html>
